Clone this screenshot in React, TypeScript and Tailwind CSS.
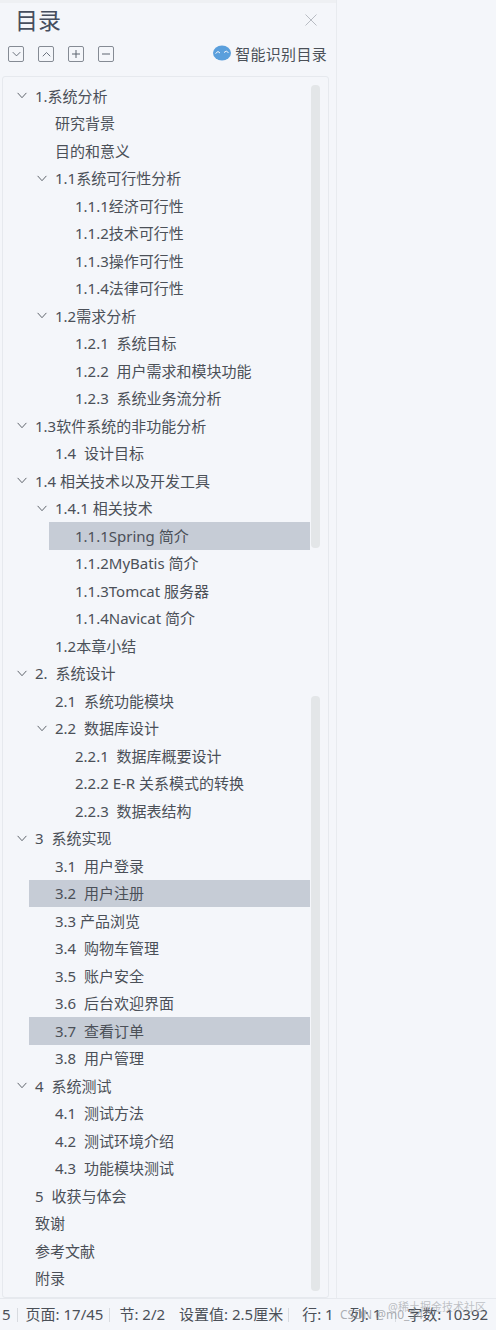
import React from 'react';

type Row = { label: string; level: number; open?: boolean; active?: boolean };

const rows: Row[] = [
  { label: '1.系统分析', level: 0, open: true },
  { label: '研究背景', level: 1 },
  { label: '目的和意义', level: 1 },
  { label: '1.1系统可行性分析', level: 1, open: true },
  { label: '1.1.1经济可行性', level: 2 },
  { label: '1.1.2技术可行性', level: 2 },
  { label: '1.1.3操作可行性', level: 2 },
  { label: '1.1.4法律可行性', level: 2 },
  { label: '1.2需求分析', level: 1, open: true },
  { label: '1.2.1  系统目标', level: 2 },
  { label: '1.2.2  用户需求和模块功能', level: 2 },
  { label: '1.2.3  系统业务流分析', level: 2 },
  { label: '1.3软件系统的非功能分析', level: 0, open: true },
  { label: '1.4  设计目标', level: 1 },
  { label: '1.4 相关技术以及开发工具', level: 0, open: true },
  { label: '1.4.1 相关技术', level: 1, open: true },
  { label: '1.1.1Spring 简介', level: 2, active: true },
  { label: '1.1.2MyBatis 简介', level: 2 },
  { label: '1.1.3Tomcat 服务器', level: 2 },
  { label: '1.1.4Navicat 简介', level: 2 },
  { label: '1.2本章小结', level: 1 },
  { label: '2.  系统设计', level: 0, open: true },
  { label: '2.1  系统功能模块', level: 1 },
  { label: '2.2  数据库设计', level: 1, open: true },
  { label: '2.2.1  数据库概要设计', level: 2 },
  { label: '2.2.2 E-R 关系模式的转换', level: 2 },
  { label: '2.2.3  数据表结构', level: 2 },
  { label: '3  系统实现', level: 0, open: true },
  { label: '3.1  用户登录', level: 1 },
  { label: '3.2  用户注册', level: 1, active: true },
  { label: '3.3 产品浏览', level: 1 },
  { label: '3.4  购物车管理', level: 1 },
  { label: '3.5  账户安全', level: 1 },
  { label: '3.6  后台欢迎界面', level: 1 },
  { label: '3.7  查看订单', level: 1, active: true },
  { label: '3.8  用户管理', level: 1 },
  { label: '4  系统测试', level: 0, open: true },
  { label: '4.1  测试方法', level: 1 },
  { label: '4.2  测试环境介绍', level: 1 },
  { label: '4.3  功能模块测试', level: 1 },
  { label: '5  收获与体会', level: 0 },
  { label: '致谢', level: 0 },
  { label: '参考文献', level: 0 },
  { label: '附录', level: 0 },
];

const Chevron = ({ up = false }: { up?: boolean }) => (
  <svg viewBox="0 0 12 8" className="w-[9px] h-[6px] text-[#5c6470]" fill="none" stroke="currentColor" strokeWidth="1.2">
    <path d={up ? 'M1 7l5-5 5 5' : 'M1 1.5l5 5 5-5'} />
  </svg>
);

const ToolButton = ({ children }: { children: React.ReactNode }) => (
  <button className="w-[16px] h-[16px] rounded-[2px] border border-[#858b94] flex items-center justify-center text-[#5c6470]">
    {children}
  </button>
);

const TocRow = ({ row }: { row: Row }) => {
  const band = ['ml-[6px]', 'ml-[26px]', 'ml-[46px]'][row.level];
  return (
    <div className={`h-[27.5px] flex items-center pl-[7px] ${band} ${row.active ? 'bg-[#c6ccd6]' : ''}`}>
      <span className="w-[19px] flex items-center shrink-0">
        {row.open && (
          <svg viewBox="0 0 12 8" className="w-[12px] h-[7px] text-[#4a5058]" fill="none" stroke="currentColor" strokeWidth="1">
            <path d="M1 1l5 5.5L11 1" />
          </svg>
        )}
      </span>
      <span className="whitespace-pre">{row.label}</span>
    </div>
  );
};

export default function App() {
  return (
    <div
      className="w-[496px] h-[1330px] overflow-hidden bg-[#f4f6fa] text-[#4b5058] text-[15px] flex flex-col"
      style={{ fontFamily: '"Noto Sans", "Noto Sans CJK SC", sans-serif' }}
    >
      <div className="flex flex-1 min-h-0">
        {/* Sidebar */}
        <div className="w-[336px] shrink-0 flex flex-col">
          <div className="h-[3px] bg-[#eef0f3]" />
          <div className="h-[73px] px-[2px]">
            <div className="flex items-center justify-between pl-[13px] pr-[17px] pt-[1px]">
              <h1 className="text-[23px] leading-[32px] text-[#464e5e]">目录</h1>
              <svg viewBox="0 0 12 12" className="w-[12px] h-[12px] text-[#a8adb5] -mt-[1px]" fill="none" stroke="currentColor" strokeWidth="0.8">
                <path d="M0.5 0.5l11 11M11.5 0.5l-11 11" />
              </svg>
            </div>
            <div className="flex items-center justify-between pl-[6px] pr-[7px] mt-[8px]">
              <div className="flex gap-[14px] -mt-[1px]">
                <ToolButton><Chevron /></ToolButton>
                <ToolButton><Chevron up /></ToolButton>
                <ToolButton>
                  <svg viewBox="0 0 8 8" className="w-[8px] h-[8px]" fill="none" stroke="currentColor"><path d="M4 0v8M0 4h8" /></svg>
                </ToolButton>
                <ToolButton>
                  <svg viewBox="0 0 8 8" className="w-[8px] h-[8px]" fill="none" stroke="currentColor"><path d="M0 4h8" /></svg>
                </ToolButton>
              </div>
              <div className="flex items-center gap-[4px]">
                <svg viewBox="0 0 18 16" className="w-[18px] h-[16px] -mt-[3px]">
                  <ellipse cx="9" cy="8" rx="9" ry="7.5" fill="#5a9fdc" />
                  <path d="M2.5 8.5l2.5-2 2 1.5M11 7.5l2.5-1.5 2 2" fill="none" stroke="#f4f6fa" strokeWidth="1" />
                </svg>
                <span className="leading-[20px] tracking-[0.3px]">智能识别目录</span>
              </div>
            </div>
          </div>

          {/* Panel */}
          <div className="relative h-[1222px] ml-[2px] mr-[7px] rounded-[3px] border border-[#e6e9ee] pt-[5px] pr-[18px] overflow-hidden">
            {rows.map((row) => (
              <TocRow key={row.label} row={row} />
            ))}
            <div className="absolute top-[8px] right-[8px] w-[9px] h-[463px] rounded-[4px] bg-[#e3e6e8]" />
            <div className="absolute top-[619px] right-[8px] w-[9px] h-[595px] rounded-[4px] bg-[#e3e6e8]" />
          </div>
        </div>
        <div className="w-px bg-[#e8ebef] shrink-0" />
        <div className="flex-1" />
      </div>

      {/* Status bar */}
      <div className="relative h-[32px] shrink-0 flex items-center border-t border-[#e6e9ee] whitespace-nowrap">
        <span className="pl-[2px] pr-[6px]">5</span>
        <span className="h-[14px] w-px bg-[#d8dbe0]" />
        <span className="pl-[8px] pr-[6px]">页面: 17/45</span>
        <span className="h-[14px] w-px bg-[#d8dbe0]" />
        <span className="pl-[9px]">节: 2/2</span>
        <span className="pl-[14px] pr-[5px]">设置值: 2.5厘米</span>
        <span className="h-[14px] w-px bg-[#d8dbe0]" />
        <span className="pl-[13px]">行: 1</span>
        <span className="pl-[16px] pr-[14px]">列: 1</span>
        <span className="h-[14px] w-px bg-[#d8dbe0]" />
        <span className="pl-[11px]">字数: 10392</span>
        <span className="absolute left-[340px] top-[7px] text-[12px] text-[#8a8d92]/70">CSDN @m0_54</span>
        <span className="absolute left-[388px] top-[0px] text-[11px] text-[#a5a8ad]/70">@稀土掘金技术社区</span>
      </div>
    </div>
  );
}
